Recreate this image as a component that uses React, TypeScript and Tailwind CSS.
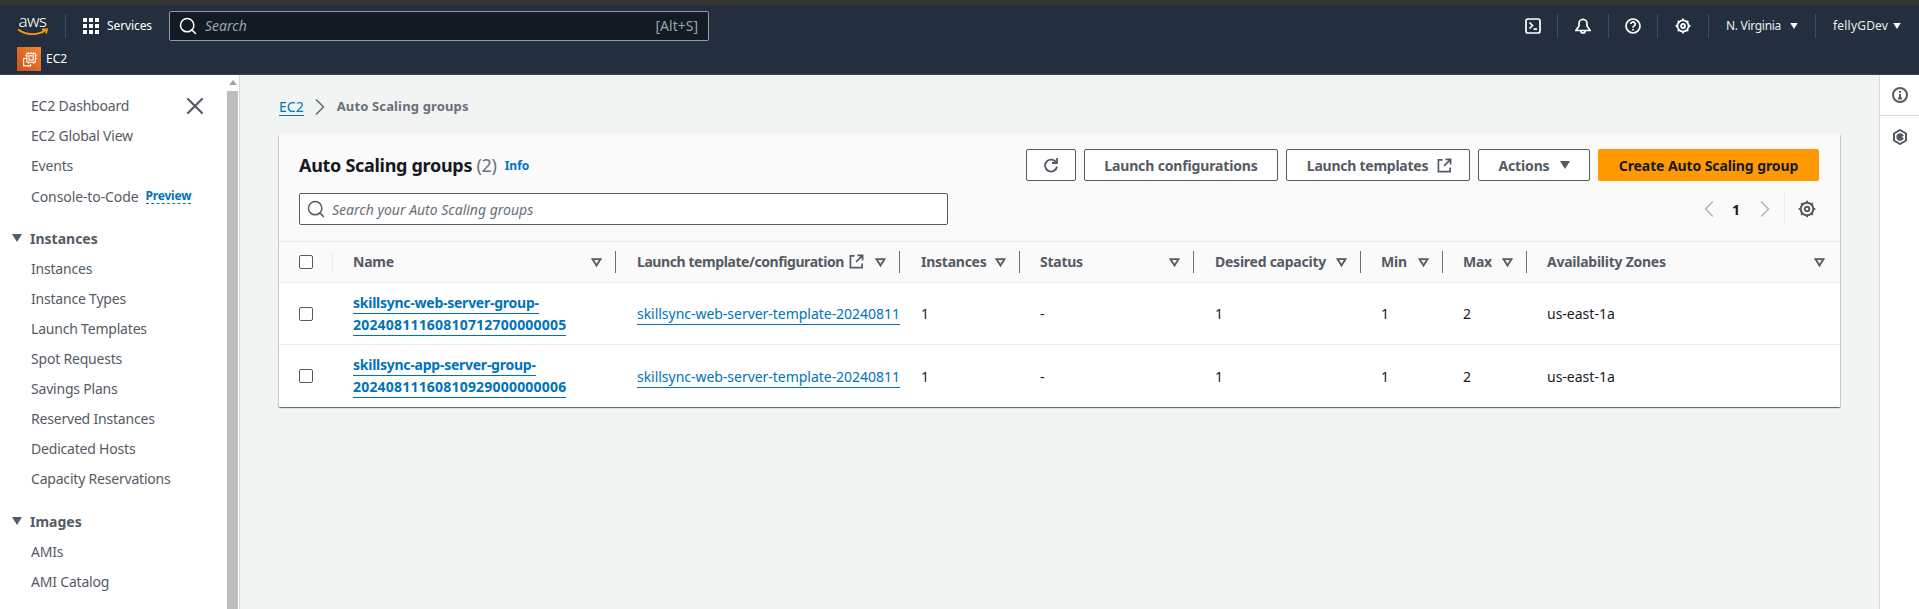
import { ChevronLeft, ChevronRight, Search, X } from "lucide-react";

const font = { fontFamily: '"Noto Sans", "Open Sans", sans-serif' };

const navTop = ["EC2 Dashboard", "EC2 Global View", "Events"];
const instanceLinks = [
  "Instances",
  "Instance Types",
  "Launch Templates",
  "Spot Requests",
  "Savings Plans",
  "Reserved Instances",
  "Dedicated Hosts",
  "Capacity Reservations",
];

const columns = [
  { label: "Name", width: "w-[284px]", pad: "pl-[21px] pr-[14px]", track: "tracking-[-0.25px]" },
  { label: "Launch template/configuration", width: "w-[284px]", pad: "pl-[21px] pr-[14px]", track: "tracking-[-0.42px]", external: true },
  { label: "Instances", width: "w-[120px]", pad: "pl-[21px] pr-[14px]", track: "tracking-[-0.25px]" },
  { label: "Status", width: "w-[174px]", pad: "pl-[20px] pr-[14px]", track: "tracking-[-0.25px]" },
  { label: "Desired capacity", width: "w-[167px]", pad: "pl-[21px] pr-[14px]", track: "tracking-[-0.25px]" },
  { label: "Min", width: "w-[82px]", pad: "pl-[20px] pr-[14px]", track: "tracking-[-0.25px]" },
  { label: "Max", width: "w-[84px]", pad: "pl-[20px] pr-[14px]", track: "tracking-[-0.25px]" },
  { label: "Availability Zones", width: "flex-1", pad: "pl-[20px] pr-[15px]", track: "tracking-[-0.25px]", last: true },
];

const groups = [
  { first: "skillsync-web-server-group-", second: "20240811160810712700000005" },
  { first: "skillsync-app-server-group-", second: "20240811160810929000000006" },
];

function Caret({ className }: { className: string }) {
  return (
    <svg viewBox="0 0 10 8" className={className} fill="currentColor">
      <path d="M0 0h10L5 8z" />
    </svg>
  );
}

function SortIcon() {
  return (
    <svg viewBox="0 0 12 10" className="h-[9px] w-[11px] shrink-0 text-[#545b64]" fill="none" stroke="currentColor" strokeWidth="2">
      <path d="M1.5 1.2h9L6 8.4z" />
    </svg>
  );
}

function ExternalIcon({ className }: { className: string }) {
  return (
    <svg viewBox="0 0 16 16" className={className} fill="none" stroke="currentColor" strokeWidth="1.800">
      <path d="M6 2H1.500v12.500H14V10M9 1.500h5.500V7M14 2 7.500 8.500" />
    </svg>
  );
}

function Checkbox() {
  return <div className="h-[14px] w-[14px] rounded-[2px] border border-[#545b64] bg-white" />;
}

function Gear({ className }: { className: string }) {
  return (
    <svg viewBox="0 0 16 16" className={className} fill="none" stroke="currentColor" strokeWidth="1.800">
      <circle cx="8" cy="8" r="2" />
      <circle cx="8" cy="8" r="5.600" />
      <path d="M8 .6v1.800M8 13.600v1.800M.6 8h1.800M13.600 8h1.800M2.800 2.800 4 4M12 12l1.200 1.200M2.800 13.200 4 12M12 4l1.200-1.200" />
    </svg>
  );
}

function HeaderDivider() {
  return <div className="h-[24px] w-px bg-[#414d5c]" />;
}

function TopBar() {
  return (
    <header className="h-[70px] border-b border-[#414750] bg-[#232f3e] text-white">
      <div className="flex h-[41px] items-center">
        <div className="relative ml-[17px] flex h-[28px] w-[31px] flex-col items-center">
          <span className="text-[17px] leading-[17px] font-light tracking-[-0.5px]">aws</span>
          <svg viewBox="0 0 32 10" className="absolute top-[16px] left-0 h-[10px] w-[32px]" fill="none" stroke="#f90" strokeWidth="1.800">
            <path d="M1 1.500c8 6 20 6 27 1M25 1.500h5l-1 4" />
          </svg>
        </div>
        <div className="mr-[17px] ml-[17px] h-[24px] w-px bg-[#414d5c]" />
        <div className="grid h-[16px] w-[16px] grid-cols-3 gap-[2px]">
          {Array.from({ length: 9 }).map((_, i) => (
            <div key={i} className="bg-white" />
          ))}
        </div>
        <span className="ml-[8px] w-[46px] text-[12px] leading-none tracking-[-0.1px] whitespace-nowrap">Services</span>
        <div className="ml-[16px] flex h-[30px] w-[540px] items-center rounded-[2px] border border-[#8d9bab] bg-[#141a22] pr-[10px] pl-[8px] text-[#95a5b5]">
          <Search className="h-[20px] w-[20px] text-white" strokeWidth={1.800} />
          <span className="ml-[7px] text-[14px] italic">Search</span>
          <span className="ml-auto text-[14px]">[Alt+S]</span>
        </div>
        <div className="ml-auto flex items-center pr-[18px]">
          <svg viewBox="0 0 16 16" className="h-[16px] w-[16px]" fill="none" stroke="white" strokeWidth="1.700">
            <rect x="1" y="1" width="14" height="14" rx="2" />
            <path d="m4.500 4.500 3 3-3 3M8.500 11.200h3.500" />
          </svg>
          <div className="ml-[16px]"><HeaderDivider /></div>
          <svg viewBox="0 0 16 16" className="mx-[17px] h-[16px] w-[16px]" fill="none" stroke="white" strokeWidth="1.700">
            <path d="M.8 12.500h14.400L12 8V5.500a4 4 0 0 0-8 0V8zM8 1.500V.5M6 13a2 2 0 0 0 4 0" />
          </svg>
          <HeaderDivider />
          <svg viewBox="0 0 16 16" className="mx-[16px] h-[16px] w-[16px]" fill="none" stroke="white" strokeWidth="1.700">
            <circle cx="8" cy="8" r="7" />
            <path d="M5.800 6a2.200 2.200 0 1 1 3.400 1.900c-.8.500-1.200 1-1.200 1.800M8 11v1.500" />
          </svg>
          <HeaderDivider />
          <Gear className="mx-[17px] h-[16px] w-[16px]" />
          <HeaderDivider />
          <span className="ml-[17px] w-[56px] text-[12px] leading-none tracking-[-0.3px] whitespace-nowrap text-[#eaeded]">N. Virginia</span>
          <Caret className="ml-[8px] h-[6px] w-[8px]" />
          <div className="ml-[17px]"><HeaderDivider /></div>
          <span className="ml-[17px] w-[53px] text-[12px] leading-none tracking-[0.2px] whitespace-nowrap text-[#eaeded]">fellyGDev</span>
          <Caret className="ml-[7px] h-[6px] w-[8px]" />
        </div>
      </div>
      <div className="flex h-[28px] items-start">
        <div className="mt-[1px] ml-[17px] flex h-[24px] w-[24px] items-center justify-center bg-gradient-to-tr from-[#c8511b] to-[#f58536]">
          <svg viewBox="0 0 16 16" className="h-[17px] w-[17px]" fill="none" stroke="white" strokeWidth="1">
            <rect x="5.500" y="2.500" width="8" height="8" />
            <rect x="7.500" y="4.500" width="4" height="4" />
            <path d="M7 1v1.500M9.500 1v1.500M12 1v1.500M7 10.500V12M12 10.500V12M4 4.500h1.500M4 7h1.500M13.500 4.500H15M13.500 7H15M5 7H2.500v7H9v-2" />
          </svg>
        </div>
        <span className="mt-[6px] ml-[5px] text-[12px] leading-[14px]">EC2</span>
      </div>
    </header>
  );
}

function NavItem({ label }: { label: string }) {
  return <div className="h-[30px] pl-[31px] text-[14px] leading-[30px] tracking-[-0.2px] whitespace-nowrap text-[#545b64]">{label}</div>;
}

function NavHeading({ label }: { label: string }) {
  return (
    <div className="mt-[12px] flex h-[31px] items-center pb-[1px] text-[#545b64]">
      <Caret className="ml-[12px] h-[8px] w-[10px]" />
      <span className="ml-[8px] text-[14px] font-bold">{label}</span>
    </div>
  );
}

function Sidebar() {
  return (
    <aside className="flex shrink-0">
      <div className="relative w-[226px] overflow-hidden bg-white pt-[16px]">
        <X className="absolute top-[17px] right-[17px] h-[28px] w-[28px] text-[#545b64]" strokeWidth={1.800} />
        {navTop.map((label) => (
          <NavItem key={label} label={label} />
        ))}
        <div className="flex h-[30px] items-center pl-[31px] text-[14px] tracking-[-0.1px] text-[#545b64]">
          Console-to-Code
          <span className="ml-[7px] border-b border-dashed border-[#0073bb] text-[12px] leading-[15px] font-bold tracking-[-0.2px] text-[#0073bb]">Preview</span>
        </div>
        <NavHeading label="Instances" />
        {instanceLinks.map((label) => (
          <NavItem key={label} label={label} />
        ))}
        <NavHeading label="Images" />
        <NavItem label="AMIs" />
        <NavItem label="AMI Catalog" />
      </div>
      <div className="flex w-[13px] flex-col items-center bg-white">
        <div className="mt-[5px] mb-[6px] h-0 w-0 border-x-[4px] border-b-[5px] border-x-transparent border-b-[#a3a3a3]" />
        <div className="w-[11px] flex-1 bg-[#bdbdbd]" />
      </div>
      <div className="w-px bg-[#d5dbdb]" />
    </aside>
  );
}

function Button({ children }: { children: React.ReactNode }) {
  return (
    <div className="flex h-[32px] items-center justify-center rounded-[2px] border border-[#545b64] bg-white text-[14px] font-bold tracking-[-0.15px] whitespace-nowrap text-[#545b64]">
      {children}
    </div>
  );
}

function Toolbar() {
  return (
    <div className="flex h-[107px] flex-col bg-[#fafafa] pl-[20px]">
      <div className="mt-[15px] flex h-[32px] items-center pr-[21px]">
        <h1 className="text-[18px] leading-[32px] font-bold tracking-[-0.3px] whitespace-nowrap text-[#16191f]">
          Auto Scaling groups <span className="font-normal text-[#687078]">(2)</span>
        </h1>
        <span className="mt-[2px] ml-[8px] text-[12px] font-bold text-[#0073bb]">Info</span>
        <div className="ml-auto flex gap-[8px]">
          <div className="w-[50px]">
            <Button>
              <svg viewBox="0 0 16 16" className="h-[16px] w-[16px]" fill="none" stroke="currentColor" strokeWidth="1.800">
                <path d="M13.500 6A6 6 0 1 0 14 9.500M14 1v5H9" />
              </svg>
            </Button>
          </div>
          <div className="w-[194px]"><Button>Launch configurations</Button></div>
          <div className="w-[184px]">
            <Button>
              <span className="ml-[3px] tracking-[-0.25px]">Launch templates</span>
              <ExternalIcon className="ml-[9px] h-[15px] w-[15px]" />
            </Button>
          </div>
          <div className="w-[112px]">
            <Button>
              Actions
              <Caret className="ml-[10px] h-[8px] w-[10px]" />
            </Button>
          </div>
          <div className="flex h-[32px] w-[221px] items-center justify-center rounded-[2px] bg-[#f90] text-[14px] font-bold tracking-[-0.1px] whitespace-nowrap text-[#16191f]">
            Create Auto Scaling group
          </div>
        </div>
      </div>
      <div className="mt-[12px] flex items-start pr-[24px]">
        <div className="flex h-[32px] w-[649px] items-center rounded-[2px] border border-[#545b64] bg-white pl-[6px] text-[#687078]">
          <Search className="h-[20px] w-[20px] text-[#545b64]" strokeWidth={1.800} />
          <span className="ml-[6px] text-[14px] italic">Search your Auto Scaling groups</span>
        </div>
        <div className="ml-auto flex h-[32px] items-center">
          <ChevronLeft className="h-[28px] w-[28px] text-[#aab7b8]" strokeWidth={1.300} />
          <span className="mr-[11px] ml-[9px] text-[14px] font-bold text-[#16191f]">1</span>
          <ChevronRight className="h-[28px] w-[28px] text-[#aab7b8]" strokeWidth={1.300} />
          <div className="mr-[13px] ml-[5px] h-[32px] w-px bg-[#eaeded]" />
          <Gear className="h-[18px] w-[18px] text-[#545b64]" />
        </div>
      </div>
    </div>
  );
}

function TableHead() {
  return (
    <div className="flex h-[42px] border-y border-[#eaeded] bg-[#fafafa]">
      <div className="flex w-[53px] items-center pl-[20px]">
        <Checkbox />
      </div>
      {columns.map((col, i) => (
        <div key={col.label} className={`${col.width} ${col.pad} relative flex items-center`}>
          {i === 0 && <div className="absolute top-[9px] left-0 h-[22px] w-px bg-[#eaeded]" />}
          <span className={`${col.track} mb-[2px] text-[14px] font-bold whitespace-nowrap text-[#545b64]`}>{col.label}</span>
          {col.external && <ExternalIcon className="mb-[2px] ml-[5px] h-[15px] w-[15px] shrink-0 text-[#545b64]" />}
          <div className="ml-auto">
            <SortIcon />
          </div>
          {!col.last && <div className="absolute top-[9px] right-0 h-[22px] w-px bg-[#687078]" />}
        </div>
      ))}
    </div>
  );
}

function TableRow({ first, second }: { first: string; second: string }) {
  return (
    <div className="flex h-[62px] items-center border-b border-[#eaeded] bg-white text-[14px] text-[#16191f] last:border-b-0">
      <div className="flex w-[53px] items-center pl-[20px]">
        <Checkbox />
      </div>
      <div className="w-[284px] pl-[21px] text-[14px] leading-[22px] font-bold text-[#0073bb]">
        <div><span className="border-b border-[#0073bb] pb-[1px] tracking-[-0.25px]">{first}</span></div>
        <div><span className="border-b border-[#0073bb] pb-[1px] tracking-[0.2px]">{second}</span></div>
      </div>
      <div className="w-[284px] pl-[21px] tracking-[-0.03px] whitespace-nowrap text-[#0073bb]">
        <span className="border-b border-[#0073bb] pb-[1px]">skillsync-web-server-template-20240811</span>
      </div>
      <div className="w-[120px] pl-[21px]">1</div>
      <div className="w-[174px] pl-[20px]">-</div>
      <div className="w-[167px] pl-[21px]">1</div>
      <div className="w-[82px] pl-[20px]">1</div>
      <div className="w-[84px] pl-[20px]">2</div>
      <div className="flex-1 pl-[20px]">us-east-1a</div>
    </div>
  );
}

function RightRail() {
  return (
    <aside className="w-[40px] shrink-0 border-l border-[#d5dbdb] bg-white text-[#545b64]">
      <div className="flex h-[41px] items-center justify-center border-b border-[#d5dbdb]">
        <svg viewBox="0 0 16 16" className="h-[16px] w-[16px]" fill="none" stroke="currentColor" strokeWidth="2">
          <circle cx="8" cy="8" r="7" />
          <path d="M8 7v4M6 11.500h4M8 4v1.800" />
        </svg>
      </div>
      <div className="flex h-[41px] items-center justify-center">
        <svg viewBox="0 0 16 16" className="h-[16px] w-[16px]" fill="none" stroke="currentColor" strokeWidth="2">
          <path d="M8 1 14 4.500v7L8 15l-6-3.500v-7z" />
          <path d="M10.500 6.500A2.800 2.800 0 1 0 10.500 9.500L8 8z" fill="currentColor" />
        </svg>
      </div>
    </aside>
  );
}

export default function App() {
  return (
    <div className="flex h-[609px] w-full flex-col overflow-hidden bg-[#f2f3f3]" style={font}>
      <div className="h-[5px] bg-[#333333]" />
      <TopBar />
      <div className="flex min-h-0 flex-1">
        <Sidebar />
        <main className="flex-1 pt-[22px] pr-[39px] pl-[39px]">
          <div className="flex h-[20px] items-center text-[14px]">
            <span className="border-b border-[#0073bb] leading-[17px] text-[#0073bb]">EC2</span>
            <ChevronRight className="mr-[3px] ml-[2px] h-[28px] w-[28px] text-[#687078]" strokeWidth={1.500} />
            <span className="text-[13px] font-bold tracking-[0.15px] text-[#687078]">Auto Scaling groups</span>
          </div>
          <section className="mt-[17px] overflow-hidden rounded-[1px] shadow-[0_1px_1px_0_rgba(0,28,36,0.5),1px_1px_1px_0_rgba(0,28,36,0.15),-1px_1px_1px_0_rgba(0,28,36,0.15)]">
            <Toolbar />
            <TableHead />
            {groups.map((g) => (
              <TableRow key={g.second} first={g.first} second={g.second} />
            ))}
          </section>
        </main>
        <RightRail />
      </div>
    </div>
  );
}
